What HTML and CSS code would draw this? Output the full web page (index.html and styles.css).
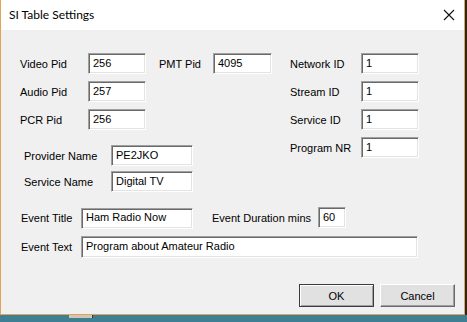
FILE: index.html
```html
<!DOCTYPE html>
<html>
<head>
  <meta charset="utf-8" />
  <title>SI Table Settings</title>
  <link rel="stylesheet" href="styles.css">
</head>
<body>

  <div class="window">

    <div class="titlebar">
      <span class="title">SI Table Settings</span>
      <svg class="close" width="12" height="12" viewBox="0 0 12 12">
        <path d="M1 1 L11 11 M11 1 L1 11" stroke="#111" stroke-width="1.1" fill="none" />
      </svg>
    </div>

    <div class="client">

      <div class="top">
        <div class="left">
          <div class="pids">
            <div class="grid colA">
              <label>Video Pid</label><input type="text" value="256" readonly />
              <label>Audio Pid</label><input type="text" value="257" readonly />
              <label>PCR Pid</label><input type="text" value="256" readonly />
            </div>
            <div class="grid colB">
              <label>PMT Pid</label><input type="text" value="4095" readonly />
            </div>
          </div>
          <div class="grid names">
            <label>Provider Name</label><input type="text" value="PE2JKO" readonly />
            <label>Service Name</label><input type="text" value="Digital TV" readonly />
          </div>
        </div>

        <div class="grid colC">
          <label>Network ID</label><input type="text" value="1" readonly />
          <label>Stream ID</label><input type="text" value="1" readonly />
          <label>Service ID</label><input type="text" value="1" readonly />
          <label>Program NR</label><input type="text" value="1" readonly />
        </div>
      </div>

      <div class="events">
        <div class="eventRow">
          <label class="evLabel">Event Title</label>
          <input type="text" class="evTitle" value="Ham Radio Now" readonly />
          <label class="durLabel">Event Duration mins</label>
          <input type="text" class="evDur" value="60" readonly />
        </div>
        <div class="eventRow">
          <label class="evLabel">Event Text</label>
          <input type="text" class="evText" value="Program about Amateur Radio" readonly />
        </div>
      </div>

      <div class="buttons">
        <button class="btn default">OK</button>
        <button class="btn">Cancel</button>
      </div>

    </div>
  </div>

  <div class="taskbar">
    <span class="blob"></span>
  </div>

</body>
</html>
```

FILE: styles.css
```css
html, body
{
  margin: 0px;
  padding: 0px;
}

body
{
  width: 467px;
  height: 322px;
  overflow: hidden;
  background-color: #3f7f94;
  font-family: "Liberation Sans", Arial, sans-serif;
  font-size: 11px;
  color: #000;
}

.window
{
  width: 465px;
  height: 315px;
  box-sizing: border-box;
  border: 1px solid #e2a257;
  border-top: none;
  background-color: #f0f0f0;
  box-shadow: 2px 0 0 #2e261c;
  display: flex;
  flex-direction: column;
}

.titlebar
{
  height: 30px;
  flex: none;
  background-color: #fff;
  display: flex;
  align-items: center;
  justify-content: space-between;
  padding: 0 9px 0 8px;
}

.title
{
  font-family: Lato, "Noto Sans", sans-serif;
  font-size: 12px;
  color: #000;
  padding-bottom: 1px;
}

.client
{
  flex: 1;
  padding: 23px 9px 0 19px;
}

.grid
{
  display: grid;
  grid-auto-rows: 21px;
  row-gap: 7px;
  align-items: center;
}

label
{
  white-space: nowrap;
}

input
{
  box-sizing: border-box;
  height: 21px;
  margin: 0;
  padding: 0 0 2px 4px;
  font-family: "Liberation Sans", Arial, sans-serif;
  font-size: 11px;
  color: #000;
  background-color: #fff;
  border: 1px solid;
  border-color: #a0a0a0 #fff #fff #a0a0a0;
  box-shadow: inset 1px 1px 0 #696969, inset -1px -1px 0 #e3e3e3;
  outline: none;
}

.top
{
  display: flex;
  align-items: flex-start;
}

.pids
{
  display: flex;
  align-items: flex-start;
}

.colA
{
  grid-template-columns: 68px 58px;
}

.colB
{
  grid-template-columns: 54px 59px;
  margin-left: 13px;
}

.names
{
  grid-template-columns: 87px 82px;
  row-gap: 5px;
  margin: 15px 0 0 4px;
}

.colC
{
  grid-template-columns: 71px 58px;
  margin-left: 18px;
}

.events
{
  margin-top: 15px;
  margin-left: 1px;
  display: flex;
  flex-direction: column;
  gap: 7px;
}

.eventRow
{
  display: flex;
  align-items: center;
}

.evLabel
{
  width: 60px;
}

.evTitle
{
  width: 112px;
}

.durLabel
{
  margin-left: 19px;
  width: 106px;
}

.evDur
{
  width: 28px;
  margin-bottom: 1px;
}

.evText
{
  width: 337px;
  height: 22px;
}

.buttons
{
  margin-top: 26px;
  display: flex;
  justify-content: flex-end;
  gap: 6px;
}

.btn
{
  box-sizing: border-box;
  width: 75px;
  height: 23px;
  margin: 0;
  padding: 0;
  font-family: "Liberation Sans", Arial, sans-serif;
  font-size: 11px;
  color: #000;
  background-color: #e1e1e1;
  border: 1px solid;
  border-color: #fff #696969 #696969 #fff;
  box-shadow: inset -1px -1px 0 #a0a0a0;
}

.btn.default
{
  border: 1px solid #3c3c3c;
  box-shadow: inset 1px 1px 0 #fff, inset -1px -1px 0 #a0a0a0;
}

.taskbar
{
  height: 7px;
  position: relative;
  background-color: #3f7f94;
}

.blob
{
  position: absolute;
  left: 69px;
  top: 0;
  width: 23px;
  height: 3px;
  background-color: #cfc6b4;
  border-right: 1px solid #3a3a3a;
}
```
